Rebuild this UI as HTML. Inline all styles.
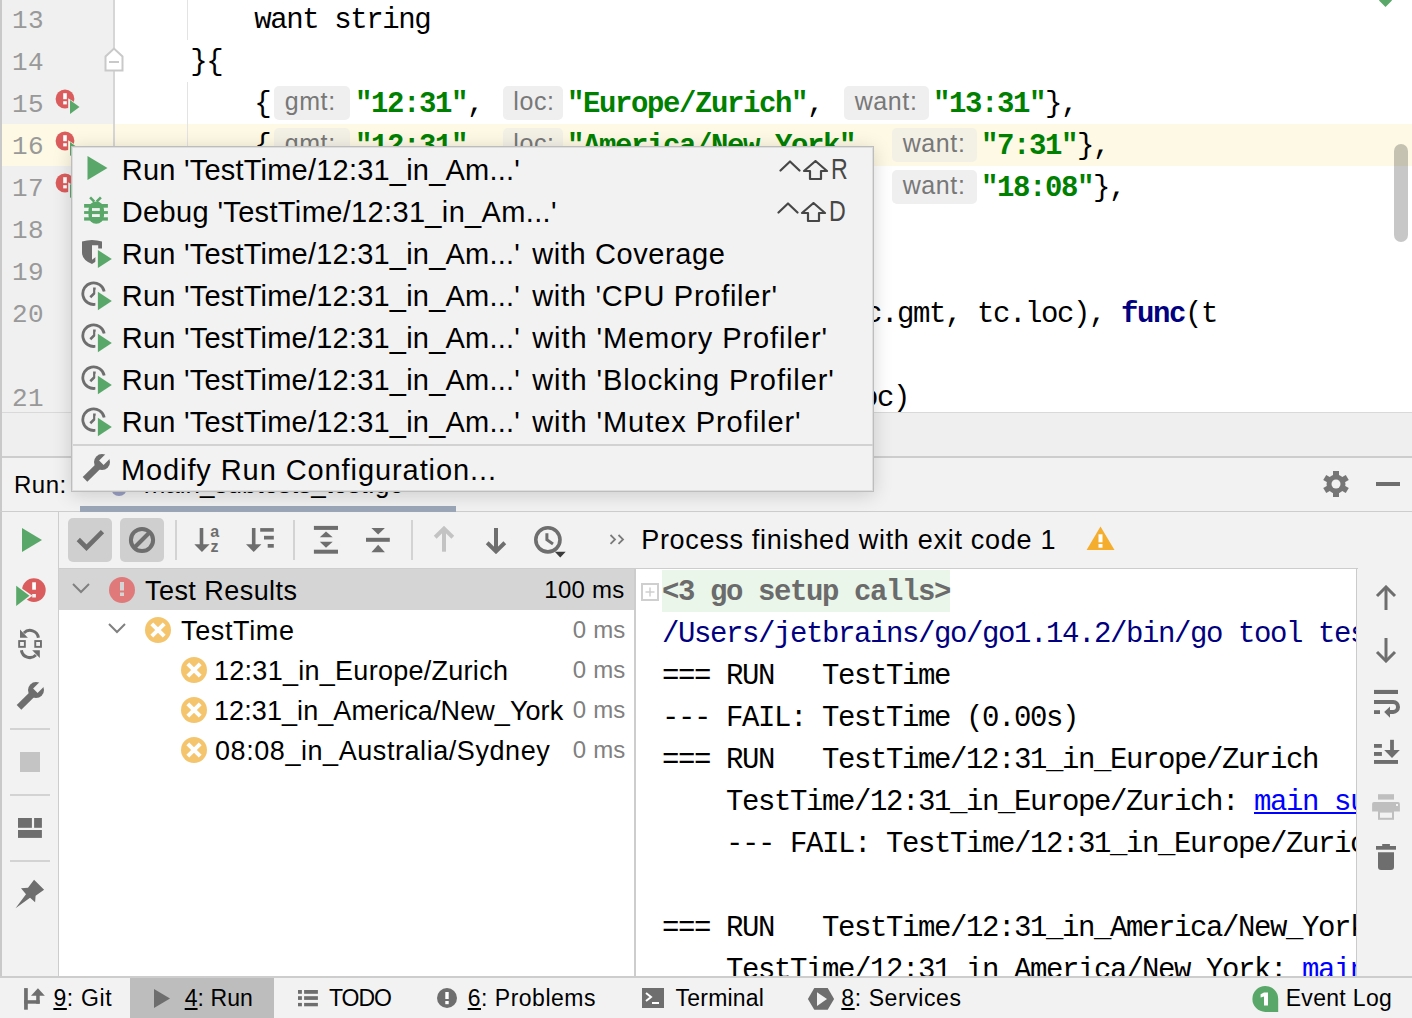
<!DOCTYPE html><html><head><meta charset="utf-8"><style>
html,body{margin:0;padding:0;}
body{width:1412px;height:1018px;position:relative;overflow:hidden;background:#f2f2f2;font-family:"Liberation Sans",sans-serif;}
div,svg{box-sizing:border-box;}
</style></head><body>
<div style="position:absolute;left:0px;top:0px;width:1412px;height:412px;background:#ffffff;"></div>
<div style="position:absolute;left:0px;top:0px;width:114px;height:412px;background:#f0f0f0;"></div>
<div style="position:absolute;left:0px;top:124px;width:1412px;height:42px;background:#fdf9e4;"></div>
<div style="position:absolute;left:113px;top:0px;width:2px;height:412px;background:#d6d6d6;"></div>
<div style="position:absolute;left:0px;top:0px;width:2px;height:977px;background:#c9c9c9;"></div>
<div style="position:absolute;left:187px;top:0px;width:1px;height:40px;background:#e3e3e3;"></div>
<div style="position:absolute;left:187px;top:82px;width:1px;height:330px;background:#e3e3e3;"></div>
<div style="position:absolute;left:12px;top:6.66px;font-family:'Liberation Mono', monospace;font-size:26px;line-height:29.04px;color:#999999;font-weight:normal;letter-spacing:0.3974609375px;white-space:pre;">13</div>
<div style="position:absolute;left:12px;top:48.66px;font-family:'Liberation Mono', monospace;font-size:26px;line-height:29.04px;color:#999999;font-weight:normal;letter-spacing:0.3974609375px;white-space:pre;">14</div>
<div style="position:absolute;left:12px;top:90.66px;font-family:'Liberation Mono', monospace;font-size:26px;line-height:29.04px;color:#999999;font-weight:normal;letter-spacing:0.3974609375px;white-space:pre;">15</div>
<div style="position:absolute;left:12px;top:132.66px;font-family:'Liberation Mono', monospace;font-size:26px;line-height:29.04px;color:#999999;font-weight:normal;letter-spacing:0.3974609375px;white-space:pre;">16</div>
<div style="position:absolute;left:12px;top:174.66px;font-family:'Liberation Mono', monospace;font-size:26px;line-height:29.04px;color:#999999;font-weight:normal;letter-spacing:0.3974609375px;white-space:pre;">17</div>
<div style="position:absolute;left:12px;top:216.66px;font-family:'Liberation Mono', monospace;font-size:26px;line-height:29.04px;color:#999999;font-weight:normal;letter-spacing:0.3974609375px;white-space:pre;">18</div>
<div style="position:absolute;left:12px;top:258.66px;font-family:'Liberation Mono', monospace;font-size:26px;line-height:29.04px;color:#999999;font-weight:normal;letter-spacing:0.3974609375px;white-space:pre;">19</div>
<div style="position:absolute;left:12px;top:300.66px;font-family:'Liberation Mono', monospace;font-size:26px;line-height:29.04px;color:#999999;font-weight:normal;letter-spacing:0.3974609375px;white-space:pre;">20</div>
<div style="position:absolute;left:12px;top:384.66px;font-family:'Liberation Mono', monospace;font-size:26px;line-height:29.04px;color:#999999;font-weight:normal;letter-spacing:0.3974609375px;white-space:pre;">21</div>
<svg style="position:absolute;left:104px;top:47px;" width="20" height="25" viewBox="0 0 20 25"><path d="M1.5 23.5 V9.5 L10 1.5 L18.5 9.5 V23.5 Z" fill="#ffffff" stroke="#c9c9c9" stroke-width="2"/><rect x="5" y="14" width="10" height="2" fill="#c9c9c9"/></svg>
<svg style="position:absolute;left:55px;top:89px;" width="28" height="28" viewBox="0 0 28 28"><circle cx="10" cy="10" r="9.4" fill="#db5c5c"/><rect x="8.2" y="4.2" width="3.6" height="6" fill="#fff"/><rect x="8.2" y="12.2" width="3.6" height="3.2" fill="#fff"/><path d="M13.2 9.2 L27 18 L13.2 26.8 Z" fill="#f0f0f0"/><path d="M15 11 L24.5 18 L15 25 Z" fill="#59a869"/></svg>
<svg style="position:absolute;left:55px;top:131px;" width="28" height="28" viewBox="0 0 28 28"><circle cx="10" cy="10" r="9.4" fill="#db5c5c"/><rect x="8.2" y="4.2" width="3.6" height="6" fill="#fff"/><rect x="8.2" y="12.2" width="3.6" height="3.2" fill="#fff"/><path d="M13.2 9.2 L27 18 L13.2 26.8 Z" fill="#fdf9e4"/><path d="M15 11 L24.5 18 L15 25 Z" fill="#59a869"/></svg>
<svg style="position:absolute;left:55px;top:173px;" width="28" height="28" viewBox="0 0 28 28"><circle cx="10" cy="10" r="9.4" fill="#db5c5c"/><rect x="8.2" y="4.2" width="3.6" height="6" fill="#fff"/><rect x="8.2" y="12.2" width="3.6" height="3.2" fill="#fff"/><path d="M13.2 9.2 L27 18 L13.2 26.8 Z" fill="#f0f0f0"/><path d="M15 11 L24.5 18 L15 25 Z" fill="#59a869"/></svg>
<svg style="position:absolute;left:1379px;top:0px;" width="14" height="7" viewBox="0 0 14 7"><path d="M0.5 -6 L6.5 6 L12.5 -6 Z" fill="#59a869"/></svg>
<svg style="position:absolute;left:1379px;top:-6px;" width="13" height="13" viewBox="0 0 13 13"><path d="M6.5 0 L13 6.5 L6.5 13 L0 6.5 Z" fill="#59a869"/></svg>
<div style="position:absolute;left:1394px;top:144px;width:14px;height:98px;background:rgba(0,0,0,0.22);border-radius:7px;"></div>
<div style="position:absolute;left:254.2px;top:5.19px;font-family:'Liberation Mono', monospace;font-size:29px;line-height:32.39px;color:#000;font-weight:normal;letter-spacing:-1.40283203125px;white-space:pre;">want string</div>
<div style="position:absolute;left:190.2px;top:47.19px;font-family:'Liberation Mono', monospace;font-size:29px;line-height:32.39px;color:#000;font-weight:normal;letter-spacing:-1.40283203125px;white-space:pre;">}{</div>
<div style="position:absolute;left:254.2px;top:89.19px;font-family:'Liberation Mono', monospace;font-size:29px;line-height:32.39px;color:#000;font-weight:normal;letter-spacing:-1.40283203125px;white-space:pre;">{</div>
<div style="position:absolute;left:274.2px;top:86px;width:75.60000000000002px;height:34px;background:#efefef;border-radius:5px;"></div>
<div style="position:absolute;left:284.7px;top:88.27px;font-family:'Liberation Sans', sans-serif;font-size:25px;line-height:27.93px;color:#787878;font-weight:normal;letter-spacing:0.6px;white-space:pre;">gmt:</div>
<div style="position:absolute;left:355px;top:89.19px;font-family:'Liberation Mono', monospace;font-size:29px;line-height:32.39px;color:#008000;font-weight:bold;letter-spacing:-1.40283203125px;white-space:pre;">"12:31"</div>
<div style="position:absolute;left:467px;top:89.19px;font-family:'Liberation Mono', monospace;font-size:29px;line-height:32.39px;color:#000;font-weight:normal;letter-spacing:-1.40283203125px;white-space:pre;">,</div>
<div style="position:absolute;left:502.8px;top:86px;width:60.19999999999999px;height:34px;background:#efefef;border-radius:5px;"></div>
<div style="position:absolute;left:513.3px;top:88.27px;font-family:'Liberation Sans', sans-serif;font-size:25px;line-height:27.93px;color:#787878;font-weight:normal;letter-spacing:0.6px;white-space:pre;">loc:</div>
<div style="position:absolute;left:567px;top:89.19px;font-family:'Liberation Mono', monospace;font-size:29px;line-height:32.39px;color:#008000;font-weight:bold;letter-spacing:-1.40283203125px;white-space:pre;">"Europe/Zurich"</div>
<div style="position:absolute;left:807px;top:89.19px;font-family:'Liberation Mono', monospace;font-size:29px;line-height:32.39px;color:#000;font-weight:normal;letter-spacing:-1.40283203125px;white-space:pre;">,</div>
<div style="position:absolute;left:844.2px;top:86px;width:85.0px;height:34px;background:#efefef;border-radius:5px;"></div>
<div style="position:absolute;left:854.7px;top:88.27px;font-family:'Liberation Sans', sans-serif;font-size:25px;line-height:27.93px;color:#787878;font-weight:normal;letter-spacing:0.6px;white-space:pre;">want:</div>
<div style="position:absolute;left:933px;top:89.19px;font-family:'Liberation Mono', monospace;font-size:29px;line-height:32.39px;color:#008000;font-weight:bold;letter-spacing:-1.40283203125px;white-space:pre;">"13:31"</div>
<div style="position:absolute;left:1045px;top:89.19px;font-family:'Liberation Mono', monospace;font-size:29px;line-height:32.39px;color:#000;font-weight:normal;letter-spacing:-1.40283203125px;white-space:pre;">},</div>
<div style="position:absolute;left:254.2px;top:131.19px;font-family:'Liberation Mono', monospace;font-size:29px;line-height:32.39px;color:#000;font-weight:normal;letter-spacing:-1.40283203125px;white-space:pre;">{</div>
<div style="position:absolute;left:274.2px;top:128px;width:75.60000000000002px;height:34px;background:#f3f1e6;border-radius:5px;"></div>
<div style="position:absolute;left:284.7px;top:130.28px;font-family:'Liberation Sans', sans-serif;font-size:25px;line-height:27.93px;color:#787878;font-weight:normal;letter-spacing:0.6px;white-space:pre;">gmt:</div>
<div style="position:absolute;left:355px;top:131.19px;font-family:'Liberation Mono', monospace;font-size:29px;line-height:32.39px;color:#008000;font-weight:bold;letter-spacing:-1.40283203125px;white-space:pre;">"12:31"</div>
<div style="position:absolute;left:467px;top:131.19px;font-family:'Liberation Mono', monospace;font-size:29px;line-height:32.39px;color:#000;font-weight:normal;letter-spacing:-1.40283203125px;white-space:pre;">,</div>
<div style="position:absolute;left:502.8px;top:128px;width:60.19999999999999px;height:34px;background:#f3f1e6;border-radius:5px;"></div>
<div style="position:absolute;left:513.3px;top:130.28px;font-family:'Liberation Sans', sans-serif;font-size:25px;line-height:27.93px;color:#787878;font-weight:normal;letter-spacing:0.6px;white-space:pre;">loc:</div>
<div style="position:absolute;left:567px;top:131.19px;font-family:'Liberation Mono', monospace;font-size:29px;line-height:32.39px;color:#008000;font-weight:bold;letter-spacing:-1.40283203125px;white-space:pre;">"America/New_York"</div>
<div style="position:absolute;left:855px;top:131.19px;font-family:'Liberation Mono', monospace;font-size:29px;line-height:32.39px;color:#000;font-weight:normal;letter-spacing:-1.40283203125px;white-space:pre;">,</div>
<div style="position:absolute;left:892.2px;top:128px;width:85.0px;height:34px;background:#f3f1e6;border-radius:5px;"></div>
<div style="position:absolute;left:902.7px;top:130.28px;font-family:'Liberation Sans', sans-serif;font-size:25px;line-height:27.93px;color:#787878;font-weight:normal;letter-spacing:0.6px;white-space:pre;">want:</div>
<div style="position:absolute;left:981px;top:131.19px;font-family:'Liberation Mono', monospace;font-size:29px;line-height:32.39px;color:#008000;font-weight:bold;letter-spacing:-1.40283203125px;white-space:pre;">"7:31"</div>
<div style="position:absolute;left:1077px;top:131.19px;font-family:'Liberation Mono', monospace;font-size:29px;line-height:32.39px;color:#000;font-weight:normal;letter-spacing:-1.40283203125px;white-space:pre;">},</div>
<div style="position:absolute;left:254.2px;top:173.19px;font-family:'Liberation Mono', monospace;font-size:29px;line-height:32.39px;color:#000;font-weight:normal;letter-spacing:-1.40283203125px;white-space:pre;">{</div>
<div style="position:absolute;left:274.2px;top:170px;width:75.60000000000002px;height:34px;background:#efefef;border-radius:5px;"></div>
<div style="position:absolute;left:284.7px;top:172.28px;font-family:'Liberation Sans', sans-serif;font-size:25px;line-height:27.93px;color:#787878;font-weight:normal;letter-spacing:0.6px;white-space:pre;">gmt:</div>
<div style="position:absolute;left:355px;top:173.19px;font-family:'Liberation Mono', monospace;font-size:29px;line-height:32.39px;color:#008000;font-weight:bold;letter-spacing:-1.40283203125px;white-space:pre;">"08:08"</div>
<div style="position:absolute;left:467px;top:173.19px;font-family:'Liberation Mono', monospace;font-size:29px;line-height:32.39px;color:#000;font-weight:normal;letter-spacing:-1.40283203125px;white-space:pre;">,</div>
<div style="position:absolute;left:502.8px;top:170px;width:60.19999999999999px;height:34px;background:#efefef;border-radius:5px;"></div>
<div style="position:absolute;left:513.3px;top:172.28px;font-family:'Liberation Sans', sans-serif;font-size:25px;line-height:27.93px;color:#787878;font-weight:normal;letter-spacing:0.6px;white-space:pre;">loc:</div>
<div style="position:absolute;left:567px;top:173.19px;font-family:'Liberation Mono', monospace;font-size:29px;line-height:32.39px;color:#008000;font-weight:bold;letter-spacing:-1.40283203125px;white-space:pre;">"Australia/Sydney"</div>
<div style="position:absolute;left:855px;top:173.19px;font-family:'Liberation Mono', monospace;font-size:29px;line-height:32.39px;color:#000;font-weight:normal;letter-spacing:-1.40283203125px;white-space:pre;">,</div>
<div style="position:absolute;left:892.2px;top:170px;width:85.0px;height:34px;background:#efefef;border-radius:5px;"></div>
<div style="position:absolute;left:902.7px;top:172.28px;font-family:'Liberation Sans', sans-serif;font-size:25px;line-height:27.93px;color:#787878;font-weight:normal;letter-spacing:0.6px;white-space:pre;">want:</div>
<div style="position:absolute;left:981px;top:173.19px;font-family:'Liberation Mono', monospace;font-size:29px;line-height:32.39px;color:#008000;font-weight:bold;letter-spacing:-1.40283203125px;white-space:pre;">"18:08"</div>
<div style="position:absolute;left:1093px;top:173.19px;font-family:'Liberation Mono', monospace;font-size:29px;line-height:32.39px;color:#000;font-weight:normal;letter-spacing:-1.40283203125px;white-space:pre;">},</div>
<div style="position:absolute;left:865px;top:299.19px;font-family:'Liberation Mono', monospace;font-size:29px;line-height:32.39px;color:#000;font-weight:normal;letter-spacing:-1.40283203125px;white-space:pre;">c.gmt, tc.loc), </div>
<div style="position:absolute;left:1121px;top:299.19px;font-family:'Liberation Mono', monospace;font-size:29px;line-height:32.39px;color:#000080;font-weight:bold;letter-spacing:-1.40283203125px;white-space:pre;">func</div>
<div style="position:absolute;left:1185px;top:299.19px;font-family:'Liberation Mono', monospace;font-size:29px;line-height:32.39px;color:#000;font-weight:normal;letter-spacing:-1.40283203125px;white-space:pre;">(t</div>
<div style="position:absolute;left:861px;top:383.19px;font-family:'Liberation Mono', monospace;font-size:29px;line-height:32.39px;color:#000;font-weight:normal;letter-spacing:-1.40283203125px;white-space:pre;">oc)</div>
<div style="position:absolute;left:0px;top:412px;width:1412px;height:45px;background:#efefef;"></div>
<div style="position:absolute;left:0px;top:412px;width:1412px;height:1px;background:#d9d9d9;"></div>
<div style="position:absolute;left:0px;top:456px;width:1412px;height:2px;background:#cdcdcd;"></div>
<div style="position:absolute;left:0px;top:0px;width:2px;height:977px;background:#c9c9c9;"></div>
<div style="position:absolute;left:2px;top:458px;width:1410px;height:53px;background:#f2f2f2;"></div>
<div style="position:absolute;left:14px;top:471.78px;font-family:'Liberation Sans', sans-serif;font-size:24px;line-height:26.81px;color:#000;font-weight:normal;letter-spacing:0.491px;white-space:pre;">Run:</div>
<div style="position:absolute;left:143.7px;top:470.47px;font-family:'Liberation Sans', sans-serif;font-size:26px;line-height:29.04px;color:#000;font-weight:normal;letter-spacing:0px;white-space:pre;">main_subtests_test.go</div>
<svg style="position:absolute;left:110px;top:478px;" width="20" height="20" viewBox="0 0 20 20"><circle cx="9" cy="10" r="8" fill="#9aa0c4"/></svg>
<div style="position:absolute;left:0px;top:511px;width:1412px;height:1px;background:#cdcdcd;"></div>
<div style="position:absolute;left:80px;top:506px;width:376px;height:6px;background:#9ba6b8;"></div>
<svg style="position:absolute;left:1322px;top:470px;" width="28" height="28" viewBox="0 0 28 28"><g transform="translate(14,14)" fill="#767676"><rect x="-3" y="-13" width="6" height="6" transform="rotate(0)"/><rect x="-3" y="-13" width="6" height="6" transform="rotate(60)"/><rect x="-3" y="-13" width="6" height="6" transform="rotate(120)"/><rect x="-3" y="-13" width="6" height="6" transform="rotate(180)"/><rect x="-3" y="-13" width="6" height="6" transform="rotate(240)"/><rect x="-3" y="-13" width="6" height="6" transform="rotate(300)"/><circle r="9.5"/></g><circle cx="14" cy="14" r="4.5" fill="#f2f2f2"/></svg>
<div style="position:absolute;left:1376px;top:482px;width:24px;height:4px;background:#6e6e6e;"></div>
<div style="position:absolute;left:2px;top:512px;width:56px;height:465px;background:#f2f2f2;"></div>
<div style="position:absolute;left:58px;top:512px;width:1px;height:465px;background:#cdcdcd;"></div>
<svg style="position:absolute;left:20px;top:527px;" width="24" height="26" viewBox="0 0 24 26"><path d="M2 1 L22 13 L2 25 Z" fill="#59a869"/></svg>
<svg style="position:absolute;left:14px;top:576px;" width="34" height="32" viewBox="0 0 34 32"><circle cx="19.9" cy="14.1" r="11.8" fill="#db5c5c"/><rect x="18.2" y="6.3" width="3.7" height="7.4" fill="#fff"/><rect x="18.2" y="18" width="3.7" height="3.5" fill="#f2f2f2"/><path d="M0 7 L18.5 19.8 L0 32.6 Z" fill="#f2f2f2"/><path d="M2.2 9.7 L15.5 19.8 L2.2 29.9 Z" fill="#59a869"/></svg>
<svg style="position:absolute;left:14px;top:624px;" width="30" height="38" viewBox="0 0 30 38"><rect x="5.15" y="17.05" width="5.7" height="5.8" fill="none" stroke="#6e6e6e" stroke-width="1.9"/><rect x="21.25" y="17.05" width="5.7" height="5.8" fill="none" stroke="#6e6e6e" stroke-width="1.9"/><path d="M24.4 13.7 A8.5 8.5 0 0 0 9.9 9" fill="none" stroke="#6e6e6e" stroke-width="3"/><path d="M6 5.4 L6 13.7 L13.9 13.7 Z" fill="#6e6e6e"/><path d="M7.4 26.2 A8.5 8.5 0 0 0 21.9 31" fill="none" stroke="#6e6e6e" stroke-width="3"/><path d="M18.2 26.2 L25.8 26.2 L25.8 33.9 Z" fill="#6e6e6e"/></svg>
<svg style="position:absolute;left:15.4px;top:681.1px;" width="32" height="32" viewBox="0 0 32 32"><circle cx="21" cy="9.1" r="8" fill="#6e6e6e"/><path d="M1.7 23.9 L6.3 28.7 L21 14.2 L16.4 9.6 Z" fill="#6e6e6e"/><path d="M18.1 7.6 L22.6 11.9 L30.5 4 L26 -0.3 Z" fill="#f2f2f2"/></svg>
<div style="position:absolute;left:10px;top:728px;width:40px;height:2px;background:#d3d3d3;"></div>
<div style="position:absolute;left:20px;top:752px;width:20px;height:20px;background:#c4c4c4;"></div>
<div style="position:absolute;left:10px;top:794px;width:40px;height:2px;background:#d3d3d3;"></div>
<svg style="position:absolute;left:16px;top:816px;" width="28" height="24" viewBox="0 0 28 24"><rect x="2" y="2" width="13.9" height="9.8" fill="#6e6e6e"/><rect x="18.1" y="2" width="7.8" height="9.8" fill="#6e6e6e"/><rect x="2" y="14" width="23.9" height="7.9" fill="#6e6e6e"/></svg>
<div style="position:absolute;left:10px;top:860px;width:40px;height:2px;background:#d3d3d3;"></div>
<svg style="position:absolute;left:14px;top:878px;" width="32" height="32" viewBox="0 0 32 32"><path d="M20.06 1.7 L30.1 11.7 L21.6 17.7 L21.1 24.2 L16.05 19.7 L1.5 30.2 L12 16.2 L7 10.2 L14 9.7 Z" fill="#6e6e6e"/></svg>
<div style="position:absolute;left:59px;top:512px;width:1353px;height:57px;background:#f2f2f2;"></div>
<div style="position:absolute;left:68px;top:518px;width:44px;height:44px;background:#cfcfcf;border-radius:5px;"></div>
<div style="position:absolute;left:120px;top:518px;width:44px;height:44px;background:#cfcfcf;border-radius:5px;"></div>
<svg style="position:absolute;left:74px;top:526px;" width="32" height="28" viewBox="0 0 32 28"><path d="M4.3 13.5 L12.5 21.7 L28.5 5.7" fill="none" stroke="#6e6e6e" stroke-width="4.6"/></svg>
<svg style="position:absolute;left:128px;top:526px;" width="28" height="28" viewBox="0 0 28 28"><circle cx="14" cy="14" r="11.1" fill="none" stroke="#6e6e6e" stroke-width="4"/><path d="M6.5 21.5 L21.5 6.5" stroke="#6e6e6e" stroke-width="4"/></svg>
<div style="position:absolute;left:175px;top:520px;width:2px;height:40px;background:#d3d3d3;"></div>
<svg style="position:absolute;left:192px;top:526px;" width="32" height="28" viewBox="0 0 32 28"><rect x="7.7" y="2" width="3.6" height="18" fill="#6e6e6e"/><path d="M2.3 18.3 L17.6 18.3 L9.95 26 Z" fill="#6e6e6e"/><text x="18.2" y="10.6" font-family="Liberation Sans" font-weight="bold" font-size="16" fill="#6e6e6e">a</text><text x="18.4" y="26" font-family="Liberation Sans" font-weight="bold" font-size="16" fill="#6e6e6e">z</text></svg>
<svg style="position:absolute;left:244px;top:526px;" width="32" height="28" viewBox="0 0 32 28"><rect x="7.9" y="2" width="3.6" height="18" fill="#6e6e6e"/><path d="M2 18.3 L17.4 18.3 L9.7 26 Z" fill="#6e6e6e"/><rect x="16.2" y="2.1" width="13.6" height="3.6" fill="#6e6e6e"/><rect x="20" y="9.8" width="9.8" height="3.7" fill="#6e6e6e"/><rect x="23.7" y="18" width="6.1" height="3.7" fill="#6e6e6e"/></svg>
<div style="position:absolute;left:293px;top:520px;width:2px;height:40px;background:#d3d3d3;"></div>
<svg style="position:absolute;left:312px;top:524px;" width="30" height="32" viewBox="0 0 30 32"><rect x="1.9" y="1.9" width="24.1" height="4" fill="#6e6e6e"/><rect x="1.9" y="25.7" width="24.1" height="4" fill="#6e6e6e"/><path d="M7.8 13.2 L14 7.6 L20.7 13.2 Z" fill="#6e6e6e"/><path d="M7.8 17.8 L14 23.7 L20.7 17.8 Z" fill="#6e6e6e"/></svg>
<svg style="position:absolute;left:364px;top:524px;" width="30" height="32" viewBox="0 0 30 32"><rect x="2" y="13.8" width="23.8" height="4" fill="#6e6e6e"/><path d="M7.4 3.9 L20.9 3.9 L14.15 10.4 Z" fill="#6e6e6e"/><path d="M7.4 28.3 L20.9 28.3 L14.15 20.7 Z" fill="#6e6e6e"/></svg>
<div style="position:absolute;left:411px;top:520px;width:2px;height:40px;background:#d3d3d3;"></div>
<svg style="position:absolute;left:432px;top:526px;" width="24" height="28" viewBox="0 0 24 28"><path d="M12 4 V25.7" stroke="#c3c3c3" stroke-width="4"/><path d="M3.2 11.2 L12 2.6 L20.8 11.2" fill="none" stroke="#c3c3c3" stroke-width="4"/></svg>
<svg style="position:absolute;left:484px;top:526px;" width="24" height="28" viewBox="0 0 24 28"><path d="M12 2 V23.7" stroke="#6e6e6e" stroke-width="4"/><path d="M3.2 16.8 L12 25.4 L20.8 16.8" fill="none" stroke="#6e6e6e" stroke-width="4"/></svg>
<svg style="position:absolute;left:532px;top:522px;" width="36" height="38" viewBox="0 0 36 38"><circle cx="15.9" cy="17.8" r="12.1" fill="none" stroke="#6e6e6e" stroke-width="3.6"/><path d="M14.9 11.2 V17.8 L21 22" fill="none" stroke="#6e6e6e" stroke-width="3"/><path d="M22.8 29.7 L33.7 29.7 L28.25 35.6 Z" fill="#3a3a3a"/></svg>
<svg style="position:absolute;left:608px;top:532px;" width="18" height="14" viewBox="0 0 18 14"><path d="M2.5 3 L7 7.4 L2.5 11.8 M10.5 3 L15 7.4 L10.5 11.8" fill="none" stroke="#7a7a7a" stroke-width="1.8"/></svg>
<div style="position:absolute;left:641.2px;top:524.57px;font-family:'Liberation Sans', sans-serif;font-size:27px;line-height:30.16px;color:#000;font-weight:normal;letter-spacing:0.704px;white-space:pre;">Process finished with exit code 1</div>
<svg style="position:absolute;left:1085.5px;top:526px;" width="30" height="26" viewBox="0 0 30 26"><path d="M14.5 0.4 L28.5 23.9 L0.6 23.9 Z" fill="#f4ad2d"/><rect x="12.5" y="8.3" width="4" height="8" fill="#fff"/><rect x="12.5" y="18" width="4" height="3.7" fill="#fff"/></svg>
<div style="position:absolute;left:59px;top:568px;width:1299px;height:1.5px;background:#cdcdcd;"></div>
<div style="position:absolute;left:59px;top:569px;width:576px;height:408px;background:#ffffff;"></div>
<div style="position:absolute;left:59px;top:569px;width:576px;height:41px;background:#d5d5d5;"></div>
<svg style="position:absolute;left:72px;top:583px;" width="18" height="11" viewBox="0 0 18 11"><path d="M1 1 L9 9 L17 1" fill="none" stroke="#808080" stroke-width="2"/></svg>
<svg style="position:absolute;left:108px;top:623px;" width="18" height="11" viewBox="0 0 18 11"><path d="M1 1 L9 9 L17 1" fill="none" stroke="#808080" stroke-width="2"/></svg>
<svg style="position:absolute;left:109px;top:577px;" width="26" height="26" viewBox="0 0 26 26"><circle cx="13" cy="13" r="13" fill="#e07a7a"/><rect x="11" y="5" width="4" height="8.5" fill="#d5d5d5"/><rect x="11" y="15.5" width="4" height="3.5" fill="#d5d5d5"/></svg>
<div style="position:absolute;left:145px;top:576.37px;font-family:'Liberation Sans', sans-serif;font-size:27px;line-height:30.16px;color:#000;font-weight:normal;letter-spacing:0.45px;white-space:pre;">Test Results</div>
<div style="position:absolute;left:544.3px;top:576.58px;font-family:'Liberation Sans', sans-serif;font-size:24px;line-height:26.81px;color:#000;font-weight:normal;letter-spacing:0.259px;white-space:pre;">100 ms</div>
<svg style="position:absolute;left:145px;top:617px;" width="26" height="26" viewBox="0 0 26 26"><circle cx="13" cy="13" r="13" fill="#f5c56e"/><path d="M6.8 6.8 L19.2 19.2 M19.2 6.8 L6.8 19.2" stroke="#fff" stroke-width="4"/></svg>
<div style="position:absolute;left:181px;top:616.27px;font-family:'Liberation Sans', sans-serif;font-size:27px;line-height:30.16px;color:#000;font-weight:normal;letter-spacing:0.643px;white-space:pre;">TestTime</div>
<div style="position:absolute;left:572.8px;top:617.08px;font-family:'Liberation Sans', sans-serif;font-size:24px;line-height:26.81px;color:#808080;font-weight:normal;letter-spacing:0.164px;white-space:pre;">0 ms</div>
<svg style="position:absolute;left:181px;top:657px;" width="26" height="26" viewBox="0 0 26 26"><circle cx="13" cy="13" r="13" fill="#f5c56e"/><path d="M6.8 6.8 L19.2 19.2 M19.2 6.8 L6.8 19.2" stroke="#fff" stroke-width="4"/></svg>
<div style="position:absolute;left:214px;top:656.27px;font-family:'Liberation Sans', sans-serif;font-size:27px;line-height:30.16px;color:#000;font-weight:normal;letter-spacing:0.273px;white-space:pre;">12:31_in_Europe/Zurich</div>
<div style="position:absolute;left:572.8px;top:657.08px;font-family:'Liberation Sans', sans-serif;font-size:24px;line-height:26.81px;color:#808080;font-weight:normal;letter-spacing:0.164px;white-space:pre;">0 ms</div>
<svg style="position:absolute;left:181px;top:697px;" width="26" height="26" viewBox="0 0 26 26"><circle cx="13" cy="13" r="13" fill="#f5c56e"/><path d="M6.8 6.8 L19.2 19.2 M19.2 6.8 L6.8 19.2" stroke="#fff" stroke-width="4"/></svg>
<div style="position:absolute;left:214px;top:696.27px;font-family:'Liberation Sans', sans-serif;font-size:27px;line-height:30.16px;color:#000;font-weight:normal;letter-spacing:0.083px;white-space:pre;">12:31_in_America/New_York</div>
<div style="position:absolute;left:572.8px;top:697.08px;font-family:'Liberation Sans', sans-serif;font-size:24px;line-height:26.81px;color:#808080;font-weight:normal;letter-spacing:0.164px;white-space:pre;">0 ms</div>
<svg style="position:absolute;left:181px;top:737px;" width="26" height="26" viewBox="0 0 26 26"><circle cx="13" cy="13" r="13" fill="#f5c56e"/><path d="M6.8 6.8 L19.2 19.2 M19.2 6.8 L6.8 19.2" stroke="#fff" stroke-width="4"/></svg>
<div style="position:absolute;left:215px;top:736.27px;font-family:'Liberation Sans', sans-serif;font-size:27px;line-height:30.16px;color:#000;font-weight:normal;letter-spacing:0.562px;white-space:pre;">08:08_in_Australia/Sydney</div>
<div style="position:absolute;left:572.8px;top:737.08px;font-family:'Liberation Sans', sans-serif;font-size:24px;line-height:26.81px;color:#808080;font-weight:normal;letter-spacing:0.164px;white-space:pre;">0 ms</div>
<div style="position:absolute;left:634px;top:568px;width:2px;height:409px;background:#cdcdcd;"></div>
<div style="position:absolute;left:636px;top:569px;width:720px;height:408px;background:#ffffff;"></div>
<div style="position:absolute;left:1356px;top:568px;width:1.8px;height:409px;background:#cbcbcb;"></div>
<div style="position:absolute;left:662px;top:570px;width:288px;height:42px;background:#eaf6ea;"></div>
<svg style="position:absolute;left:641px;top:583px;" width="18" height="18" viewBox="0 0 18 18"><rect x="1" y="1" width="16" height="16" fill="none" stroke="#cfcfcf" stroke-width="2"/><path d="M9 4.5 V13.5 M4.5 9 H13.5" stroke="#cfcfcf" stroke-width="1.5"/></svg>
<div style="position:absolute;left:636px;top:569px;width:720px;height:408px;overflow:hidden;">
<div style="position:absolute;left:26px;top:8.09px;font-family:'Liberation Mono', monospace;font-size:29px;line-height:32.39px;color:#6b6b6b;font-weight:bold;letter-spacing:-1.40283203125px;white-space:pre;">&lt;3 go setup calls&gt;</div>
<div style="position:absolute;left:26px;top:50.09px;font-family:'Liberation Mono', monospace;font-size:29px;line-height:32.39px;color:#000080;font-weight:normal;letter-spacing:-1.40283203125px;white-space:pre;">/Users/jetbrains/go/go1.14.2/bin/go tool test2json -t</div>
<div style="position:absolute;left:26px;top:92.09px;font-family:'Liberation Mono', monospace;font-size:29px;line-height:32.39px;color:#000;font-weight:normal;letter-spacing:-1.40283203125px;white-space:pre;">=== RUN   TestTime</div>
<div style="position:absolute;left:26px;top:134.09px;font-family:'Liberation Mono', monospace;font-size:29px;line-height:32.39px;color:#000;font-weight:normal;letter-spacing:-1.40283203125px;white-space:pre;">--- FAIL: TestTime (0.00s)</div>
<div style="position:absolute;left:26px;top:176.09px;font-family:'Liberation Mono', monospace;font-size:29px;line-height:32.39px;color:#000;font-weight:normal;letter-spacing:-1.40283203125px;white-space:pre;">=== RUN   TestTime/12:31_in_Europe/Zurich</div>
<div style="position:absolute;left:90px;top:218.09px;font-family:'Liberation Mono', monospace;font-size:29px;line-height:32.39px;color:#000;font-weight:normal;letter-spacing:-1.40283203125px;white-space:pre;">TestTime/12:31_in_Europe/Zurich: </div>
<div style="position:absolute;left:618px;top:218.09px;font-family:'Liberation Mono', monospace;font-size:29px;line-height:32.39px;color:#0000ff;font-weight:normal;letter-spacing:-1.40283203125px;white-space:pre;text-decoration:underline;">main_subtests_test.go:26</div>
<div style="position:absolute;left:90px;top:260.09px;font-family:'Liberation Mono', monospace;font-size:29px;line-height:32.39px;color:#000;font-weight:normal;letter-spacing:-1.40283203125px;white-space:pre;">--- FAIL: TestTime/12:31_in_Europe/Zurich (0.00s)</div>
<div style="position:absolute;left:26px;top:344.09px;font-family:'Liberation Mono', monospace;font-size:29px;line-height:32.39px;color:#000;font-weight:normal;letter-spacing:-1.40283203125px;white-space:pre;">=== RUN   TestTime/12:31_in_America/New_York</div>
<div style="position:absolute;left:90px;top:386.09px;font-family:'Liberation Mono', monospace;font-size:29px;line-height:32.39px;color:#000;font-weight:normal;letter-spacing:-1.40283203125px;white-space:pre;">TestTime/12:31_in_America/New_York: </div>
<div style="position:absolute;left:666px;top:386.09px;font-family:'Liberation Mono', monospace;font-size:29px;line-height:32.39px;color:#0000ff;font-weight:normal;letter-spacing:-1.40283203125px;white-space:pre;text-decoration:underline;">main_subtests_test.go:26</div>
</div>
<div style="position:absolute;left:1357px;top:569px;width:55px;height:408px;background:#f2f2f2;"></div>
<svg style="position:absolute;left:1375px;top:585px;" width="22" height="26" viewBox="0 0 22 26"><path d="M11 3 V25" stroke="#6e6e6e" stroke-width="3"/><path d="M2 11 L11 2 L20 11" fill="none" stroke="#6e6e6e" stroke-width="3"/></svg>
<svg style="position:absolute;left:1375px;top:637px;" width="22" height="26" viewBox="0 0 22 26"><path d="M11 1 V23" stroke="#6e6e6e" stroke-width="3"/><path d="M2 15 L11 24 L20 15" fill="none" stroke="#6e6e6e" stroke-width="3"/></svg>
<svg style="position:absolute;left:1372px;top:688px;" width="30" height="32" viewBox="0 0 30 32"><rect x="2" y="1.9" width="24" height="4.1" fill="#6e6e6e"/><path d="M2 13.95 H21.2 A5.03 5.03 0 0 1 21.2 24 H17" fill="none" stroke="#6e6e6e" stroke-width="4"/><path d="M12.2 23.9 L18 18.4 L18 29.8 Z" fill="#6e6e6e"/><rect x="2" y="22.2" width="6" height="3.8" fill="#6e6e6e"/></svg>
<svg style="position:absolute;left:1372px;top:738px;" width="30" height="28" viewBox="0 0 30 28"><rect x="2" y="6" width="7.9" height="3.8" fill="#6e6e6e"/><rect x="2" y="14" width="7.9" height="3.9" fill="#6e6e6e"/><rect x="2" y="22" width="24" height="3.9" fill="#6e6e6e"/><rect x="18.1" y="1.8" width="3.8" height="11" fill="#6e6e6e"/><path d="M12.2 11.9 L27.8 11.9 L20 20 Z" fill="#6e6e6e"/></svg>
<svg style="position:absolute;left:1370px;top:792px;" width="32" height="30" viewBox="0 0 32 30"><rect x="8" y="2.2" width="16" height="5.4" fill="#bfbfbf"/><path d="M2.1 12 Q2.1 10.1 4 10.1 H28 Q29.9 10.1 29.9 12 V19.6 H2.1 Z" fill="#bfbfbf"/><rect x="26" y="12" width="2" height="2" fill="#f2f2f2"/><rect x="9" y="19.6" width="14" height="7.2" fill="none" stroke="#bfbfbf" stroke-width="2"/></svg>
<svg style="position:absolute;left:1374px;top:842px;" width="24" height="30" viewBox="0 0 24 30"><rect x="2" y="4" width="20" height="3.7" fill="#6e6e6e"/><rect x="8.2" y="2" width="7.7" height="2.5" fill="#6e6e6e"/><path d="M4 10.2 H20 V24.9 Q20 27.9 17 27.9 H7 Q4 27.9 4 24.9 Z" fill="#6e6e6e"/></svg>
<div style="position:absolute;left:0px;top:977px;width:1412px;height:41px;background:#f2f2f2;"></div>
<div style="position:absolute;left:0px;top:976px;width:1412px;height:2px;background:#cdcdcd;"></div>
<div style="position:absolute;left:130px;top:978px;width:144px;height:40px;background:#bdbdbd;"></div>
<svg style="position:absolute;left:23px;top:987px;" width="24" height="24" viewBox="0 0 24 24"><rect x="1.1" y="1.1" width="3.7" height="21.6" fill="#6e6e6e"/><rect x="1.1" y="13.2" width="15.6" height="3.5" fill="#6e6e6e"/><rect x="13.2" y="8" width="3.5" height="8.7" fill="#6e6e6e"/><path d="M8 8.7 L14.95 1.3 L21.8 8.7 Z" fill="#6e6e6e"/></svg>
<div style="position:absolute;left:53.4px;top:985.68px;font-family:'Liberation Sans', sans-serif;font-size:23px;line-height:25.69px;color:#000;font-weight:normal;letter-spacing:0.646px;white-space:pre;"><u>9</u>: Git</div>
<svg style="position:absolute;left:153px;top:988px;" width="18" height="21" viewBox="0 0 18 21"><path d="M1 1 L17 10.5 L1 20 Z" fill="#6e6e6e"/></svg>
<div style="position:absolute;left:184.7px;top:985.68px;font-family:'Liberation Sans', sans-serif;font-size:23px;line-height:25.69px;color:#000;font-weight:normal;letter-spacing:0.065px;white-space:pre;"><u>4</u>: Run</div>
<svg style="position:absolute;left:297px;top:989px;" width="22" height="20" viewBox="0 0 22 20"><rect x="1" y="1" width="3.9" height="3.8" fill="#6e6e6e"/><rect x="7.1" y="1" width="13.8" height="3.8" fill="#6e6e6e"/><rect x="1" y="7.2" width="3.9" height="3.7" fill="#6e6e6e"/><rect x="7.1" y="7.2" width="13.8" height="3.7" fill="#6e6e6e"/><rect x="1" y="13.9" width="3.9" height="3.4" fill="#6e6e6e"/><rect x="7.1" y="13.9" width="13.8" height="3.4" fill="#6e6e6e"/></svg>
<div style="position:absolute;left:329px;top:985.68px;font-family:'Liberation Sans', sans-serif;font-size:23px;line-height:25.69px;color:#000;font-weight:normal;letter-spacing:-1.045px;white-space:pre;">TODO</div>
<svg style="position:absolute;left:437px;top:988px;" width="20" height="20" viewBox="0 0 20 20"><circle cx="10" cy="10" r="10" fill="#6e6e6e"/><rect x="8.3" y="4" width="3.4" height="7" fill="#fff"/><rect x="8.3" y="13" width="3.4" height="3.2" fill="#fff"/></svg>
<div style="position:absolute;left:467.7px;top:985.68px;font-family:'Liberation Sans', sans-serif;font-size:23px;line-height:25.69px;color:#000;font-weight:normal;letter-spacing:0.508px;white-space:pre;"><u>6</u>: Problems</div>
<svg style="position:absolute;left:642px;top:988px;" width="22" height="20" viewBox="0 0 22 20"><rect x="0" y="0" width="22" height="20" fill="#6e6e6e"/><path d="M4 5 L9 9 L4 13" fill="none" stroke="#fff" stroke-width="2"/><rect x="10" y="14" width="7" height="2" fill="#fff"/></svg>
<div style="position:absolute;left:675.6px;top:985.68px;font-family:'Liberation Sans', sans-serif;font-size:23px;line-height:25.69px;color:#000;font-weight:normal;letter-spacing:0.2px;white-space:pre;">Terminal</div>
<svg style="position:absolute;left:807px;top:987px;" width="28" height="24" viewBox="0 0 28 24"><path d="M7.3 1 H20.7 L27.1 11.9 L20.7 22.8 H7.3 L0.9 11.9 Z" fill="#6e6e6e"/><path d="M10 5.2 L20 11.9 L10 18.9 Z" fill="#f2f2f2"/></svg>
<div style="position:absolute;left:841.3px;top:985.68px;font-family:'Liberation Sans', sans-serif;font-size:23px;line-height:25.69px;color:#000;font-weight:normal;letter-spacing:0.584px;white-space:pre;"><u>8</u>: Services</div>
<svg style="position:absolute;left:1251.5px;top:985.8px;" width="28" height="28" viewBox="0 0 28 28"><path d="M0.4 12.9 A12.9 12.9 0 0 1 26.2 12.9 V25.9 H13.3 A12.9 12.9 0 0 1 0.4 12.9 Z" fill="#59a869"/><path d="M12 6.4 H16 V19.4 H12 V10.6 L8.6 11.6 V8.3 Z" fill="#fff"/></svg>
<div style="position:absolute;left:1285.7px;top:985.68px;font-family:'Liberation Sans', sans-serif;font-size:23px;line-height:25.69px;color:#000;font-weight:normal;letter-spacing:0.314px;white-space:pre;">Event Log</div>
<div style="position:absolute;left:71px;top:146px;width:803px;height:346px;box-shadow:0 3px 18px rgba(0,0,0,0.16);"></div>
<div style="position:absolute;left:71px;top:146px;width:803px;height:346px;background:#f2f2f2;border:1px solid #bdbdbd;box-shadow:inset 0 0 0 1px #dedede;"></div>
<div style="position:absolute;left:121.8px;top:153.85px;font-family:'Liberation Sans', sans-serif;font-size:29px;line-height:32.39px;color:#000;font-weight:normal;letter-spacing:0.215px;white-space:pre;">Run &#39;TestTime/12:31_in_Am...&#39;</div>
<div style="position:absolute;left:121.8px;top:195.85px;font-family:'Liberation Sans', sans-serif;font-size:29px;line-height:32.39px;color:#000;font-weight:normal;letter-spacing:0.349px;white-space:pre;">Debug &#39;TestTime/12:31_in_Am...&#39;</div>
<div style="position:absolute;left:121.8px;top:237.86px;font-family:'Liberation Sans', sans-serif;font-size:29px;line-height:32.39px;color:#000;font-weight:normal;letter-spacing:0.215px;white-space:pre;">Run &#39;TestTime/12:31_in_Am...&#39;</div>
<div style="position:absolute;left:532.2px;top:237.86px;font-family:'Liberation Sans', sans-serif;font-size:29px;line-height:32.39px;color:#000;font-weight:normal;letter-spacing:0.613px;white-space:pre;">with Coverage</div>
<div style="position:absolute;left:121.8px;top:279.86px;font-family:'Liberation Sans', sans-serif;font-size:29px;line-height:32.39px;color:#000;font-weight:normal;letter-spacing:0.215px;white-space:pre;">Run &#39;TestTime/12:31_in_Am...&#39;</div>
<div style="position:absolute;left:532.2px;top:279.86px;font-family:'Liberation Sans', sans-serif;font-size:29px;line-height:32.39px;color:#000;font-weight:normal;letter-spacing:0.722px;white-space:pre;">with &#39;CPU Profiler&#39;</div>
<div style="position:absolute;left:121.8px;top:321.86px;font-family:'Liberation Sans', sans-serif;font-size:29px;line-height:32.39px;color:#000;font-weight:normal;letter-spacing:0.215px;white-space:pre;">Run &#39;TestTime/12:31_in_Am...&#39;</div>
<div style="position:absolute;left:532.2px;top:321.86px;font-family:'Liberation Sans', sans-serif;font-size:29px;line-height:32.39px;color:#000;font-weight:normal;letter-spacing:0.928px;white-space:pre;">with &#39;Memory Profiler&#39;</div>
<div style="position:absolute;left:121.8px;top:363.86px;font-family:'Liberation Sans', sans-serif;font-size:29px;line-height:32.39px;color:#000;font-weight:normal;letter-spacing:0.215px;white-space:pre;">Run &#39;TestTime/12:31_in_Am...&#39;</div>
<div style="position:absolute;left:532.2px;top:363.86px;font-family:'Liberation Sans', sans-serif;font-size:29px;line-height:32.39px;color:#000;font-weight:normal;letter-spacing:0.931px;white-space:pre;">with &#39;Blocking Profiler&#39;</div>
<div style="position:absolute;left:121.8px;top:405.86px;font-family:'Liberation Sans', sans-serif;font-size:29px;line-height:32.39px;color:#000;font-weight:normal;letter-spacing:0.215px;white-space:pre;">Run &#39;TestTime/12:31_in_Am...&#39;</div>
<div style="position:absolute;left:532.2px;top:405.86px;font-family:'Liberation Sans', sans-serif;font-size:29px;line-height:32.39px;color:#000;font-weight:normal;letter-spacing:0.942px;white-space:pre;">with &#39;Mutex Profiler&#39;</div>
<div style="position:absolute;left:120.9px;top:453.86px;font-family:'Liberation Sans', sans-serif;font-size:29px;line-height:32.39px;color:#000;font-weight:normal;letter-spacing:0.914px;white-space:pre;">Modify Run Configuration...</div>
<div style="position:absolute;left:73px;top:444px;width:800px;height:2px;background:#d2d2d2;"></div>
<svg style="position:absolute;left:86px;top:155px;" width="24" height="27" viewBox="0 0 24 27"><path d="M1.5 1 L21.5 13 L1.5 25 Z" fill="#59a869"/></svg>
<svg style="position:absolute;left:83px;top:196px;" width="26" height="30" viewBox="0 0 26 30"><path d="M7.1 1.3 L11.3 5.6 M17.9 1.3 L13.7 5.6" stroke="#59a869" stroke-width="2.6"/><rect x="5.5" y="5.4" width="15.5" height="22.4" rx="7.7" ry="8" fill="#59a869"/><rect x="1.1" y="8" width="23.8" height="3.7" fill="#59a869"/><rect x="1.1" y="15.1" width="23.8" height="2.8" fill="#59a869"/><rect x="1.1" y="21.3" width="23.8" height="3.3" fill="#59a869"/><rect x="9" y="12.1" width="7.8" height="2.8" fill="#f2f2f2"/><rect x="9" y="18.1" width="7.8" height="2.9" fill="#f2f2f2"/></svg>
<svg style="position:absolute;left:81px;top:239px;" width="32" height="31" viewBox="0 0 32 31"><path d="M1 2.5 Q11 -0.5 21 2.5 L21 9.5 L17.2 9.5 L17.2 6.3 L11 6.3 L11 20.8 L15.8 17.2 L16.5 21 Q13.5 23.8 11 25 Q1 21 1 13.5 Z" fill="#6e6e6e"/><path d="M14.4 8.5 L32 20 L14.4 31.5 Z" fill="#f2f2f2"/><path d="M16.9 11 L30.8 20 L16.9 29 Z" fill="#59a869"/></svg>
<svg style="position:absolute;left:81px;top:281px;" width="32" height="31" viewBox="0 0 32 31"><path d="M23.2 10.5 A10.8 10.8 0 1 0 15 23.2" fill="none" stroke="#6e6e6e" stroke-width="2.8"/><path d="M13.4 6.5 V12.2 L9.3 16.2" fill="none" stroke="#6e6e6e" stroke-width="2.6"/><path d="M14.4 8.5 L32 20 L14.4 31.5 Z" fill="#f2f2f2"/><path d="M16.9 10.8 L30.8 20 L16.9 29.2 Z" fill="#59a869"/></svg>
<svg style="position:absolute;left:81px;top:323px;" width="32" height="31" viewBox="0 0 32 31"><path d="M23.2 10.5 A10.8 10.8 0 1 0 15 23.2" fill="none" stroke="#6e6e6e" stroke-width="2.8"/><path d="M13.4 6.5 V12.2 L9.3 16.2" fill="none" stroke="#6e6e6e" stroke-width="2.6"/><path d="M14.4 8.5 L32 20 L14.4 31.5 Z" fill="#f2f2f2"/><path d="M16.9 10.8 L30.8 20 L16.9 29.2 Z" fill="#59a869"/></svg>
<svg style="position:absolute;left:81px;top:365px;" width="32" height="31" viewBox="0 0 32 31"><path d="M23.2 10.5 A10.8 10.8 0 1 0 15 23.2" fill="none" stroke="#6e6e6e" stroke-width="2.8"/><path d="M13.4 6.5 V12.2 L9.3 16.2" fill="none" stroke="#6e6e6e" stroke-width="2.6"/><path d="M14.4 8.5 L32 20 L14.4 31.5 Z" fill="#f2f2f2"/><path d="M16.9 10.8 L30.8 20 L16.9 29.2 Z" fill="#59a869"/></svg>
<svg style="position:absolute;left:81px;top:407px;" width="32" height="31" viewBox="0 0 32 31"><path d="M23.2 10.5 A10.8 10.8 0 1 0 15 23.2" fill="none" stroke="#6e6e6e" stroke-width="2.8"/><path d="M13.4 6.5 V12.2 L9.3 16.2" fill="none" stroke="#6e6e6e" stroke-width="2.6"/><path d="M14.4 8.5 L32 20 L14.4 31.5 Z" fill="#f2f2f2"/><path d="M16.9 10.8 L30.8 20 L16.9 29.2 Z" fill="#59a869"/></svg>
<svg style="position:absolute;left:81px;top:453px;" width="32" height="32" viewBox="0 0 32 32"><circle cx="21" cy="9.1" r="8" fill="#6e6e6e"/><path d="M1.7 23.9 L6.3 28.7 L21 14.2 L16.4 9.6 Z" fill="#6e6e6e"/><path d="M18.1 7.6 L22.6 11.9 L30.5 4 L26 -0.3 Z" fill="#f2f2f2"/></svg>
<svg style="position:absolute;left:778.5px;top:159.5px" width="50" height="22" viewBox="0 0 50 22"><path d="M1.5 10.5 L11 1.5 L20.5 10.5" fill="none" stroke="#474747" stroke-width="2.2" stroke-linecap="round" stroke-linejoin="round"/><path d="M25 11 L36.5 1 L48 11 H42 V19 H31 V11 Z" fill="none" stroke="#474747" stroke-width="2.2" stroke-linejoin="round"/></svg>
<div style="position:absolute;left:831px;top:153.45px;font-family:'Liberation Sans', sans-serif;font-size:29px;line-height:32.39px;color:#474747;font-weight:normal;letter-spacing:0px;white-space:pre;transform:scaleX(0.8);transform-origin:0 0;">R</div>
<svg style="position:absolute;left:776.5px;top:201.5px" width="50" height="22" viewBox="0 0 50 22"><path d="M1.5 10.5 L11 1.5 L20.5 10.5" fill="none" stroke="#474747" stroke-width="2.2" stroke-linecap="round" stroke-linejoin="round"/><path d="M25 11 L36.5 1 L48 11 H42 V19 H31 V11 Z" fill="none" stroke="#474747" stroke-width="2.2" stroke-linejoin="round"/></svg>
<div style="position:absolute;left:829px;top:195.45px;font-family:'Liberation Sans', sans-serif;font-size:29px;line-height:32.39px;color:#474747;font-weight:normal;letter-spacing:0px;white-space:pre;transform:scaleX(0.8);transform-origin:0 0;">D</div>
</body></html>
